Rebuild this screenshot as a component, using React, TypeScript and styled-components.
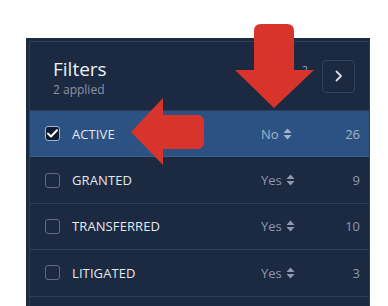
import React from "react";
import styled, { createGlobalStyle } from "styled-components";

type Filter = {
  label: string;
  value: string;
  count: number;
  checked?: boolean;
};

const filters: Filter[] = [
  { label: "ACTIVE", value: "No", count: 26, checked: true },
  { label: "GRANTED", value: "Yes", count: 9 },
  { label: "TRANSFERRED", value: "Yes", count: 10 },
  { label: "LITIGATED", value: "Yes", count: 3 },
];

const GlobalStyle = createGlobalStyle`
  html, body {
    margin: 0;
    padding: 0;
    background: #ffffff;
    overflow: hidden;
  }
  body {
    font-family: "Open Sans", "Noto Sans", sans-serif;
  }
`;

const Stage = styled.div`
  position: relative;
  width: 388px;
  height: 306px;
  padding: 38px 0 0 26px;
  box-sizing: border-box;
`;

const Panel = styled.div`
  width: 344px;
  height: 268px;
  background: #1b2941;
  padding: 3px 0 0 3px;
  box-sizing: border-box;
  overflow: hidden;
`;

const Inner = styled.div`
  height: 100%;
  border: 1px solid #2f3d57;
  border-bottom: none;
  box-sizing: border-box;
`;

const Header = styled.div`
  display: flex;
  align-items: center;
  height: 69px;
  padding: 0 14px 0 23px;
  border-bottom: 1px solid #2f3d57;
  box-sizing: border-box;
`;

const TitleBlock = styled.div`
  display: flex;
  flex-direction: column;
  flex: 1;
  margin-top: 1px;
`;

const Title = styled.div`
  color: #eef1f5;
  font-size: 19px;
  line-height: 26px;
`;

const Sub = styled.div`
  color: #8a96aa;
  font-size: 12px;
  line-height: 16px;
`;

const Badge = styled.span`
  color: #9aa6b8;
  font-size: 11px;
  margin: -14px 14px 0 0;
`;

const ChevronButton = styled.button`
  width: 33px;
  height: 33px;
  display: flex;
  align-items: center;
  justify-content: center;
  background: transparent;
  border: 1px solid #34435d;
  border-radius: 4px;
  padding: 0;
  color: #d7dce5;
`;

const Row = styled.div<{ $active?: boolean }>`
  display: flex;
  align-items: center;
  height: 46.4px;
  padding: 0 9px 0 15px;
  border-bottom: 1px solid ${(p) => (p.$active ? "#3a5f8f" : "#2f3d57")};
  background: ${(p) => (p.$active ? "#2c5283" : "transparent")};
  box-sizing: border-box;
`;

const Box = styled.span<{ $checked?: boolean }>`
  width: 15px;
  height: 15px;
  box-sizing: border-box;
  border-radius: 3px;
  border: 1px solid ${(p) => (p.$checked ? "#a7b4c8" : "#5e6b82")};
  background: ${(p) => (p.$checked ? "#0f1b31" : "transparent")};
  display: flex;
  align-items: center;
  justify-content: center;
  flex: none;
`;

const Label = styled.span`
  flex: 1;
  margin-left: 12px;
  color: #e4e8ef;
  font-size: 13px;
  letter-spacing: 0.1px;
`;

const Value = styled.span<{ $active?: boolean }>`
  width: 59px;
  display: flex;
  align-items: center;
  gap: 4px;
  color: ${(p) => (p.$active ? "#a4b3c9" : "#8c99ae")};
  font-size: 13px;
`;

const Count = styled.span<{ $active?: boolean }>`
  width: 40px;
  text-align: right;
  color: ${(p) => (p.$active ? "#a4b3c9" : "#8c99ae")};
  font-size: 13px;
`;

const Overlay = styled.svg`
  position: absolute;
  left: 0;
  top: 0;
  pointer-events: none;
`;

const SortIcon = () => (
  <svg width="9" height="12" viewBox="0 0 9 12" fill="currentColor">
    <path d="M4.5 0.5 L8.5 5 L0.5 5 Z" />
    <path d="M0.5 7 L8.5 7 L4.5 11.5 Z" />
  </svg>
);

const Check = () => (
  <svg width="11" height="9" viewBox="0 0 11 9" fill="none">
    <path
      d="M1 4.6 L4 7.5 L10 1.2"
      stroke="#ffffff"
      strokeWidth="2"
      strokeLinecap="round"
      strokeLinejoin="round"
    />
  </svg>
);

export default function App() {
  return (
    <Stage>
      <GlobalStyle />
      <Panel>
        <Inner>
          <Header>
            <TitleBlock>
              <Title>Filters</Title>
              <Sub>2 applied</Sub>
            </TitleBlock>
            <Badge>2</Badge>
            <ChevronButton>
              <svg width="8" height="12" viewBox="0 0 8 12" fill="none">
                <path
                  d="M1.5 1.5 L6 6 L1.5 10.5"
                  stroke="currentColor"
                  strokeWidth="1.8"
                  strokeLinecap="round"
                  strokeLinejoin="round"
                />
              </svg>
            </ChevronButton>
          </Header>
          {filters.map((f) => (
            <Row key={f.label} $active={f.checked}>
              <Box $checked={f.checked}>{f.checked && <Check />}</Box>
              <Label>{f.label}</Label>
              <Value $active={f.checked}>
                {f.value}
                <SortIcon />
              </Value>
              <Count $active={f.checked}>{f.count}</Count>
            </Row>
          ))}
        </Inner>
      </Panel>
      {/* annotation arrows */}
      <Overlay width="388" height="306" viewBox="0 0 388 306">
        <path
          d="M254 70 L254 31 Q254 24 261 24 L287 24 Q294 24 294 31 L294 70 L314 70 L274 108 L235 70 Z"
          fill="#d8342c"
        />
        <path
          d="M131 132 L163 98 L163 115 L197 115 Q204 115 204 122 L204 142 Q204 149 197 149 L163 149 L163 165 Z"
          fill="#d8342c"
        />
      </Overlay>
    </Stage>
  );
}
